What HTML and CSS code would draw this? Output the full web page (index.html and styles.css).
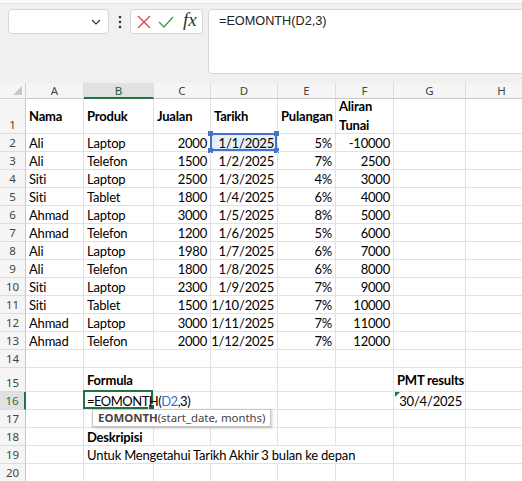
FILE: index.html
```html
<!DOCTYPE html>
<html lang="ms">
<head>
  <meta charset="UTF-8">
  <title>EOMONTH</title>
  <link rel="stylesheet" href="styles.css">
</head>
<body>
  <div class="ribbon-edge"></div>
  <div class="formula-bar">
    <div class="name-box">
      <svg class="chevron" width="10" height="6" viewBox="0 0 10 6"><path d="M1 1 L5 5 L9 1" fill="none" stroke="#333" stroke-width="1.2"/></svg>
    </div>
    <div class="more">
      <svg width="4" height="14" viewBox="0 0 4 14"><circle cx="2" cy="2" r="1.3" fill="#333"/><circle cx="2" cy="7" r="1.3" fill="#333"/><circle cx="2" cy="12" r="1.3" fill="#333"/></svg>
    </div>
    <div class="fx-buttons">
      <svg width="14" height="14" viewBox="0 0 14 14"><path d="M1 1 L13 13 M13 1 L1 13" stroke="#e0484a" stroke-width="1.4" fill="none"/></svg>
      <svg width="16" height="14" viewBox="0 0 16 14"><path d="M1 7 L6 12 L15 2" stroke="#3aa04a" stroke-width="1.4" fill="none"/></svg>
      <span class="fx">fx</span>
    </div>
    <div class="formula-input">=EOMONTH(D2,3)</div>
  </div>

  <div class="sheet">
    <!-- column headers -->
    <div class="corner"></div>
    <div class="ch">A</div>
    <div class="ch sel">B</div>
    <div class="ch">C</div>
    <div class="ch">D</div>
    <div class="ch">E</div>
    <div class="ch">F</div>
    <div class="ch">G</div>
    <div class="ch">H</div>

    <!-- 1 -->
    <div class="rh">1</div>
    <div class="c b">Nama</div>
    <div class="c b">Produk</div>
    <div class="c b">Jualan</div>
    <div class="c b">Tarikh</div>
    <div class="c b">Pulangan</div>
    <div class="c b wrap">Aliran<br>Tunai</div>
    <div class="c"></div>
    <div class="c"></div>

    <!-- 2 -->
    <div class="rh">2</div>
    <div class="c">Ali</div>
    <div class="c">Laptop</div>
    <div class="c n">2000</div>
    <div class="c n ref">1/1/2025<span class="ref-box"><i class="h tl"></i><i class="h tr"></i><i class="h bl"></i><i class="h br"></i></span></div>
    <div class="c n">5%</div>
    <div class="c n">-10000</div>
    <div class="c"></div>
    <div class="c"></div>

    <!-- 3 -->
    <div class="rh">3</div>
    <div class="c">Ali</div>
    <div class="c">Telefon</div>
    <div class="c n">1500</div>
    <div class="c n">1/2/2025</div>
    <div class="c n">7%</div>
    <div class="c n">2500</div>
    <div class="c"></div>
    <div class="c"></div>

    <!-- 4 -->
    <div class="rh">4</div>
    <div class="c">Siti</div>
    <div class="c">Laptop</div>
    <div class="c n">2500</div>
    <div class="c n">1/3/2025</div>
    <div class="c n">4%</div>
    <div class="c n">3000</div>
    <div class="c"></div>
    <div class="c"></div>

    <!-- 5 -->
    <div class="rh">5</div>
    <div class="c">Siti</div>
    <div class="c">Tablet</div>
    <div class="c n">1800</div>
    <div class="c n">1/4/2025</div>
    <div class="c n">6%</div>
    <div class="c n">4000</div>
    <div class="c"></div>
    <div class="c"></div>

    <!-- 6 -->
    <div class="rh">6</div>
    <div class="c">Ahmad</div>
    <div class="c">Laptop</div>
    <div class="c n">3000</div>
    <div class="c n">1/5/2025</div>
    <div class="c n">8%</div>
    <div class="c n">5000</div>
    <div class="c"></div>
    <div class="c"></div>

    <!-- 7 -->
    <div class="rh">7</div>
    <div class="c">Ahmad</div>
    <div class="c">Telefon</div>
    <div class="c n">1200</div>
    <div class="c n">1/6/2025</div>
    <div class="c n">5%</div>
    <div class="c n">6000</div>
    <div class="c"></div>
    <div class="c"></div>

    <!-- 8 -->
    <div class="rh">8</div>
    <div class="c">Ali</div>
    <div class="c">Laptop</div>
    <div class="c n">1980</div>
    <div class="c n">1/7/2025</div>
    <div class="c n">6%</div>
    <div class="c n">7000</div>
    <div class="c"></div>
    <div class="c"></div>

    <!-- 9 -->
    <div class="rh">9</div>
    <div class="c">Ali</div>
    <div class="c">Telefon</div>
    <div class="c n">1800</div>
    <div class="c n">1/8/2025</div>
    <div class="c n">6%</div>
    <div class="c n">8000</div>
    <div class="c"></div>
    <div class="c"></div>

    <!-- 10 -->
    <div class="rh">10</div>
    <div class="c">Siti</div>
    <div class="c">Laptop</div>
    <div class="c n">2300</div>
    <div class="c n">1/9/2025</div>
    <div class="c n">7%</div>
    <div class="c n">9000</div>
    <div class="c"></div>
    <div class="c"></div>

    <!-- 11 -->
    <div class="rh">11</div>
    <div class="c">Siti</div>
    <div class="c">Tablet</div>
    <div class="c n">1500</div>
    <div class="c n">1/10/2025</div>
    <div class="c n">7%</div>
    <div class="c n">10000</div>
    <div class="c"></div>
    <div class="c"></div>

    <!-- 12 -->
    <div class="rh">12</div>
    <div class="c">Ahmad</div>
    <div class="c">Laptop</div>
    <div class="c n">3000</div>
    <div class="c n">1/11/2025</div>
    <div class="c n">7%</div>
    <div class="c n">11000</div>
    <div class="c"></div>
    <div class="c"></div>

    <!-- 13 -->
    <div class="rh">13</div>
    <div class="c">Ahmad</div>
    <div class="c">Telefon</div>
    <div class="c n">2000</div>
    <div class="c n">1/12/2025</div>
    <div class="c n">7%</div>
    <div class="c n">12000</div>
    <div class="c"></div>
    <div class="c"></div>

    <!-- 14 -->
    <div class="rh">14</div>
    <div class="c"></div>
    <div class="c"></div>
    <div class="c"></div>
    <div class="c"></div>
    <div class="c"></div>
    <div class="c"></div>
    <div class="c"></div>
    <div class="c"></div>

    <!-- 15 -->
    <div class="rh">15</div>
    <div class="c"></div>
    <div class="c b">Formula</div>
    <div class="c"></div>
    <div class="c"></div>
    <div class="c"></div>
    <div class="c"></div>
    <div class="c b">PMT results</div>
    <div class="c"></div>

    <!-- 16 -->
    <div class="rh sel">16</div>
    <div class="c"></div>
    <div class="c active"><span class="active-box"><i class="fill"></i></span><span class="edit">=EOMONTH(<span class="ref-txt">D2</span>,3)</span></div>
    <div class="c"></div>
    <div class="c"></div>
    <div class="c"></div>
    <div class="c"></div>
    <div class="c n flag">30/4/2025</div>
    <div class="c"></div>

    <!-- 17 -->
    <div class="rh">17</div>
    <div class="c"></div>
    <div class="c tip-cell"><div class="tip"><b>EOMONTH</b>(start_date, months)</div></div>
    <div class="c"></div>
    <div class="c"></div>
    <div class="c"></div>
    <div class="c"></div>
    <div class="c"></div>
    <div class="c"></div>

    <!-- 18 -->
    <div class="rh">18</div>
    <div class="c"></div>
    <div class="c b">Deskripisi</div>
    <div class="c"></div>
    <div class="c"></div>
    <div class="c"></div>
    <div class="c"></div>
    <div class="c"></div>
    <div class="c"></div>

    <!-- 19 -->
    <div class="rh">19</div>
    <div class="c"></div>
    <div class="c span5">Untuk Mengetahui Tarikh Akhir 3 bulan ke depan</div>
    <div class="c"></div>
    <div class="c"></div>

    <!-- 20 -->
    <div class="rh">20</div>
    <div class="c"></div>
    <div class="c"></div>
    <div class="c"></div>
    <div class="c"></div>
    <div class="c"></div>
    <div class="c"></div>
    <div class="c"></div>
    <div class="c"></div>
  </div>
</body>
</html>
```

FILE: styles.css
```css
body {
  margin: 0;
  width: 522px;
  height: 481px;
  overflow: hidden;
  background: #f0f0f0;
  font-family: "Lato", "Liberation Sans", sans-serif;
}
.ribbon-edge {
  height: 3px;
  background: #fafafa;
  border-bottom: 1px solid #e3e3e3;
}
.formula-bar {
  display: flex;
  align-items: flex-start;
  height: 79px;
  padding: 5px 0 0 8px;
  box-sizing: border-box;
}
.name-box {
  width: 101px;
  height: 25px;
  box-sizing: border-box;
  background: #fff;
  border: 1px solid #d6d6d6;
  border-radius: 4px;
  display: flex;
  align-items: center;
  justify-content: flex-end;
  padding-right: 7px;
}
.more {
  width: 21px;
  height: 25px;
  display: flex;
  align-items: center;
  justify-content: center;
}
.fx-buttons {
  width: 73px;
  height: 25px;
  box-sizing: border-box;
  background: #fff;
  border: 1px solid #d6d6d6;
  border-radius: 4px;
  display: flex;
  align-items: center;
  gap: 7px;
  padding-left: 6px;
}
.fx {
  font-family: "Liberation Serif", serif;
  font-style: italic;
  font-size: 19px;
  color: #333;
  margin-top: -3px;
  margin-left: 2px;
}
.formula-input {
  flex: 1;
  margin-left: 5px;
  margin-right: -6px;
  height: 65px;
  box-sizing: border-box;
  background: #fff;
  border: 1px solid #d6d6d6;
  border-radius: 4px;
  padding: 4px 10px;
  font-family: "Liberation Sans", sans-serif;
  font-size: 12.7px;
  color: #222;
}

.sheet {
  display: grid;
  grid-template-columns: 26px 58px 70px 57px 67px 58px 58px 72px 72px;
  grid-template-rows: 16px 35px repeat(13, 18px) 24px repeat(5, 18px);
  background: #fff;
  font-size: 13px;
  letter-spacing: -0.2px;
  color: #000;
}
.corner, .ch, .rh {
  background: #f5f5f5;
  font-family: "Noto Sans", sans-serif;
  font-size: 11.5px;
  letter-spacing: 0;
  color: #444;
  box-sizing: border-box;
}
.corner {
  position: relative;
  border-right: 1px solid #d0d0d0;
  border-bottom: 1px solid #d0d0d0;
}
.corner::after {
  content: "";
  position: absolute;
  right: 3px;
  bottom: 3px;
  border-left: 9px solid transparent;
  border-bottom: 9px solid #c8c8c8;
}
.ch {
  display: flex;
  align-items: center;
  justify-content: center;
  border-right: 1px solid #dcdcdc;
  border-bottom: 1px solid #c8c8c8;
}
.ch.sel {
  background: #e1e1e1;
  color: #1e5c37;
  border-bottom: 2px solid #217346;
}
.rh {
  display: flex;
  align-items: flex-end;
  justify-content: center;
  line-height: 17px;
  border-right: 1px solid #c8c8c8;
  border-bottom: 1px solid #dcdcdc;
}
.rh.sel {
  background: #e1e1e1;
  color: #217346;
  border-right: 2px solid #217346;
}
.c {
  display: flex;
  align-items: center;
  padding: 0 3px;
  box-sizing: border-box;
  white-space: nowrap;
  border-right: 1px solid #e1e1e1;
  border-bottom: 1px solid #e1e1e1;
  position: relative;
}
.n {
  justify-content: flex-end;
}
.b {
  font-weight: bold;
}
.wrap {
  white-space: normal;
  line-height: 19px;
}
.span5 {
  grid-column: span 5;
}
.ref {
  background: #e8eef9;
}
.ref-box {
  position: absolute;
  inset: -1px 0 0 -1px;
  border: 2px solid #4472c4;
}
.h {
  position: absolute;
  width: 5px;
  height: 5px;
  background: #4472c4;
}
.h.tl { left: -4px; top: -4px; }
.h.tr { right: -4px; top: -4px; }
.h.bl { left: -4px; bottom: -4px; }
.h.br { right: -4px; bottom: -4px; }
.ref-txt {
  color: #3a6ec8;
}
.active {
  z-index: 1;
}
.edit {
  position: relative;
  letter-spacing: -0.5px;
}
.active-box {
  position: absolute;
  inset: -2px 0 0 -1px;
  border: 2px solid #217346;
}
.fill {
  position: absolute;
  right: -4px;
  bottom: -4px;
  width: 5px;
  height: 5px;
  background: #1f5f4a;
  border: 1px solid #fff;
}
.flag::before {
  content: "";
  position: absolute;
  left: 1px;
  top: 0;
  border-top: 5px solid #217346;
  border-right: 5px solid transparent;
}
.tip-cell {
  z-index: 2;
}
.tip {
  position: absolute;
  left: 8px;
  top: -1px;
  width: 179px;
  height: 18px;
  box-sizing: border-box;
  background: #fff;
  border: 1px solid #c6c6c6;
  box-shadow: 1px 1px 3px rgba(0,0,0,0.2);
  padding-left: 5px;
  font-family: "Noto Sans", sans-serif;
  font-size: 11.4px;
  letter-spacing: 0;
  line-height: 16px;
  color: #444;
}
```
